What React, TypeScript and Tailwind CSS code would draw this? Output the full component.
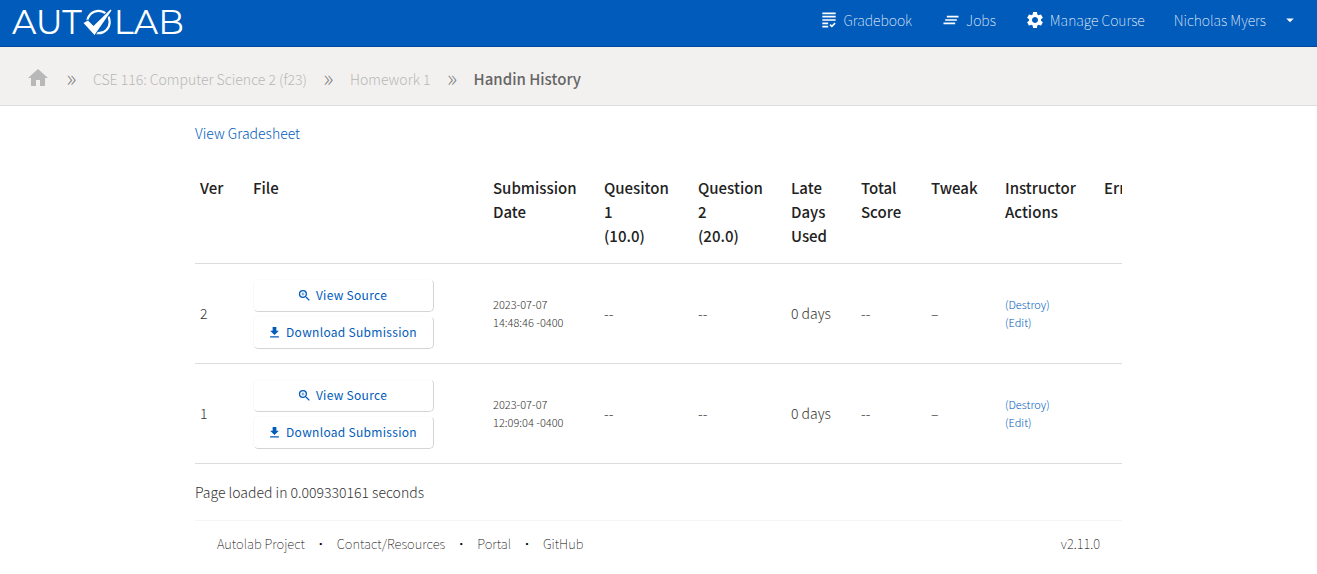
import type { ReactNode } from 'react';
import {
	MdArrowDropDown,
	MdClearAll,
	MdFileDownload,
	MdGrading,
	MdHome,
	MdSettings,
	MdZoomIn,
} from 'react-icons/md';

type Submission = {
	version: number;
	date: string;
	time: string;
};

const submissions: Submission[] = [
	{ version: 2, date: '2023-07-07', time: '14:48:46 -0400' },
	{ version: 1, date: '2023-07-07', time: '12:09:04 -0400' },
];

const columns = [
	{ label: 'Ver', width: 'w-[53px]' },
	{ label: 'File', width: 'w-[240px]' },
	{ label: 'Submission Date', width: 'w-[111px]' },
	{ label: 'Quesiton 1\n(10.0)', width: 'w-[94px]' },
	{ label: 'Question 2\n(20.0)', width: 'w-[93px]' },
	{ label: 'Late Days Used', width: 'w-[70px]' },
	{ label: 'Total Score', width: 'w-[70px]' },
	{ label: 'Tweak', width: 'w-[74px]' },
	{ label: 'Instructor Actions', width: 'w-[99px]' },
	{ label: 'Errors', width: 'w-[75px]' },
];

const footerLinks = ['Autolab Project', 'Contact/Resources', 'Portal', 'GitHub'];

export default function App() {
	return (
		<div className="min-h-screen bg-white font-['Noto_Sans_CJK_SC',sans-serif] text-sm leading-6 font-light text-[#333333]">
			<Header />
			<Breadcrumbs />
			<main className="mx-auto max-w-[927px] pt-[15px]">
				<a href="#gradesheet" className="text-[#005bbb]">
					View Gradesheet
				</a>
				<SubmissionTable />
				<p className="mt-4">Page loaded in 0.009330161 seconds</p>
			</main>
			<Footer />
		</div>
	);
}

/* ── Top bar ─────────────────────────────────────────── */

function Header() {
	return (
		<header className="flex h-[47px] items-start justify-between border-b border-[#004a99] bg-[#005bbb] pr-[18px] pl-3 text-white">
			<a href="#home" aria-label="Autolab" className="flex h-11 items-center font-['Montserrat','Lato',sans-serif] text-[34px] font-normal">
				<span>AUT</span>
				<LogoMark />
				<span>LAB</span>
			</a>
			<nav className="flex h-10 items-center gap-[29px] font-thin">
				<NavLink icon={<MdGrading className="h-5 w-5" />}>Gradebook</NavLink>
				<NavLink icon={<MdClearAll className="h-5 w-5" />}>Jobs</NavLink>
				<NavLink icon={<MdSettings className="h-5 w-5" />}>Manage Course</NavLink>
				<button type="button" className="flex items-center gap-[15px]">
					Nicholas Myers
					<MdArrowDropDown className="h-[18px] w-[18px]" />
				</button>
			</nav>
		</header>
	);
}

function NavLink({ icon, children }: { icon: ReactNode; children: ReactNode }) {
	return (
		<a href="#nav" className="flex items-center gap-[5px]">
			{icon}
			{children}
		</a>
	);
}

function LogoMark() {
	return (
		<svg viewBox="0 0 32 28" className="h-7 w-8" aria-hidden="true">
			<circle cx="16.5" cy="14" r="11.2" fill="none" stroke="white" strokeWidth="2.2" />
			<path
				d="M1.5 15 L6 12.5 L11.5 18 L28.5 1.5 L29.5 2.5 L12.5 27 Z"
				fill="white"
				stroke="#005bbb"
				strokeWidth="2"
				paintOrder="stroke"
			/>
		</svg>
	);
}

/* ── Breadcrumbs ─────────────────────────────────────── */

function Breadcrumbs() {
	return (
		<nav aria-label="Breadcrumb" className="flex h-[59px] items-center border-b border-[#dddddd] bg-[#f2f1ef] px-[26px] pt-1.5 text-[#b8b8b8]">
			<a href="#home" aria-label="Home" className="pb-0.5">
				<MdHome className="h-6 w-6" />
			</a>
			<Separator />
			<a href="#course">CSE 116: Computer Science 2 (f23)</a>
			<Separator />
			<a href="#homework">Homework 1</a>
			<Separator />
			<span className="text-[15px] font-medium text-[#666666]">Handin History</span>
		</nav>
	);
}

function Separator() {
	return <span className="w-[43px] pb-1 text-center text-2xl leading-6 font-thin text-[#777777]">»</span>;
}

/* ── Submissions ─────────────────────────────────────── */

function SubmissionTable() {
	return (
		<div className="mt-4 overflow-hidden">
			<table className="w-[979px] table-fixed border-collapse text-left">
				<thead>
					<tr className="border-b border-[#dddddd] align-top text-[15px] text-[#222222]">
						{columns.map((column) => (
							<th key={column.label} className={`${column.width} py-[15px] pr-6 pl-[5px] font-medium whitespace-pre-line`}>
								{column.label}
							</th>
						))}
					</tr>
				</thead>
				<tbody>
					{submissions.map((submission) => (
						<SubmissionRow key={submission.version} submission={submission} />
					))}
				</tbody>
			</table>
		</div>
	);
}

function SubmissionRow({ submission }: { submission: Submission }) {
	return (
		<tr className="h-[100px] border-b border-[#dddddd] [&>td]:px-[5px] [&>td]:pb-0.5">
			<td>{submission.version}</td>
			<td className="pt-0.5">
				<div className="flex w-[181px] flex-col gap-1">
					<FileButton icon={<MdZoomIn className="h-[15px] w-[15px]" />}>View Source</FileButton>
					<FileButton icon={<MdFileDownload className="h-[15px] w-[15px]" />}>Download Submission</FileButton>
				</div>
			</td>
			<td className="text-[11px] leading-[18px]">
				{submission.date}
				<br />
				{submission.time}
			</td>
			<td>--</td>
			<td>--</td>
			<td className="whitespace-nowrap">0 days</td>
			<td>--</td>
			<td>–</td>
			<td className="text-[11px] leading-[18px] text-[#005bbb]">
				<a href="#destroy">(Destroy)</a>
				<br />
				<a href="#edit">(Edit)</a>
			</td>
			<td />
		</tr>
	);
}

function FileButton({ icon, children }: { icon: ReactNode; children: ReactNode }) {
	return (
		<button
			type="button"
			className="flex h-[33px] items-center justify-center gap-1 rounded-[5px] border border-t-[#fcfcfc] border-r-[#d4d4d4] border-b-[#d4d4d4] border-l-[#f8f8f8] pr-[3px] text-xs font-normal tracking-wide text-[#005bbb]"
		>
			{icon}
			{children}
		</button>
	);
}

/* ── Footer ──────────────────────────────────────────── */

function Footer() {
	return (
		<footer className="mx-auto mt-4 flex max-w-[927px] justify-between border-t border-[#f5f5f5] px-[22px] pt-[11px] text-[13px] leading-6 font-thin text-black">
			<ul className="flex">
				{footerLinks.map((label, i) => (
					<li key={label} className="flex">
						{i > 0 && <span className="w-8 text-center">·</span>}
						<a href="#footer">{label}</a>
					</li>
				))}
			</ul>
			<span>v2.11.0</span>
		</footer>
	);
}
